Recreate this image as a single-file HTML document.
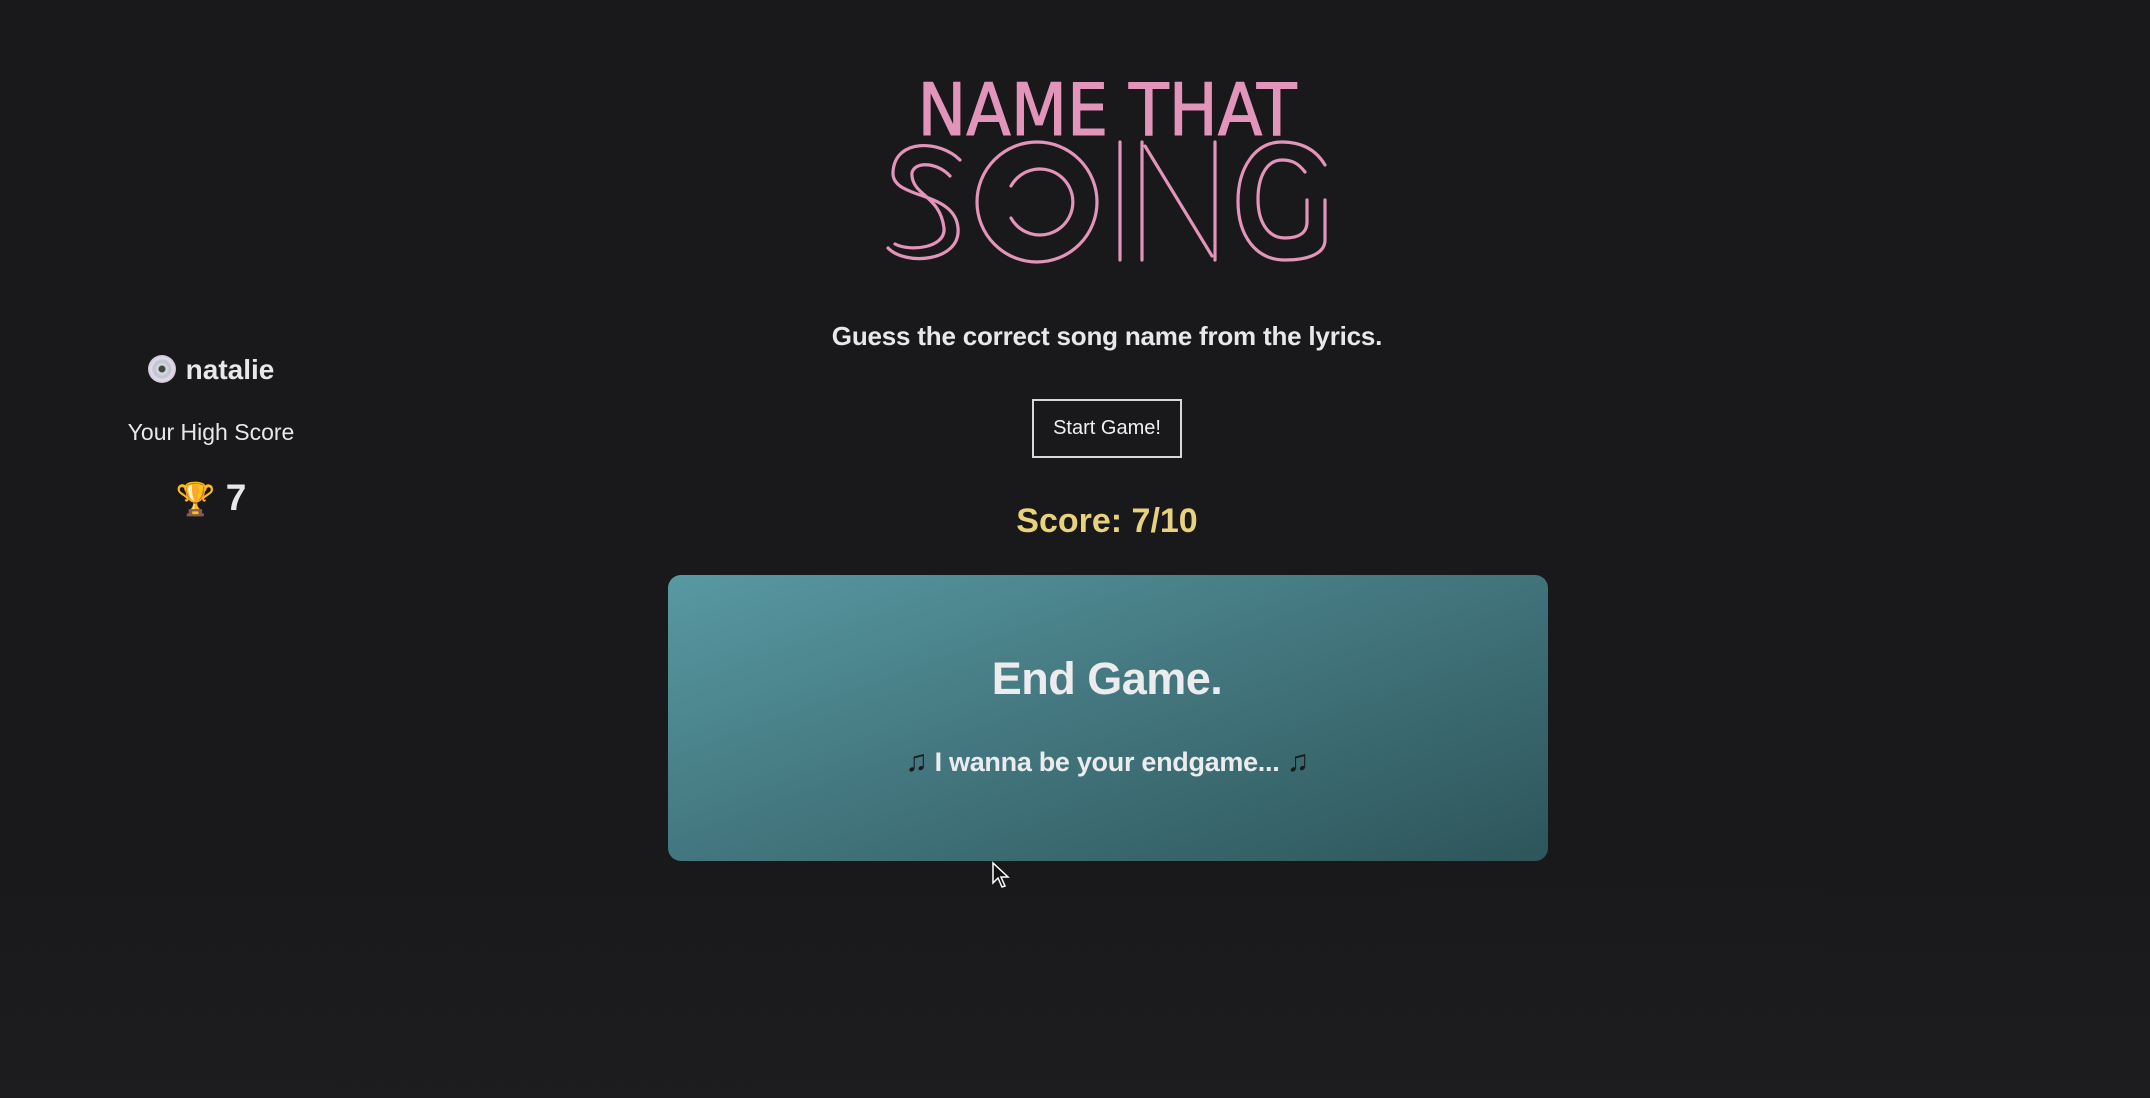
<!DOCTYPE html>
<html><head><meta charset="utf-8"><style>
html,body{margin:0;padding:0}
body{width:2150px;height:1098px;background:linear-gradient(#19191b 0%,#19191b 80%,#1d1d1f 100%);font-family:"Liberation Sans",sans-serif;color:#e8e8ea;position:relative;overflow:hidden}
.c{position:absolute;left:0;width:2214px;text-align:center;white-space:nowrap}
.l{position:absolute;left:0;width:422px;text-align:center;white-space:nowrap}
</style></head><body>
<svg style="position:absolute;left:0;top:0" width="2150" height="300">
<text x="1107" y="135" font-family="DejaVu Sans Condensed, Liberation Sans, sans-serif" font-size="72" fill="#e394ba" stroke="#e394ba" stroke-width="1" textLength="379" lengthAdjust="spacingAndGlyphs" text-anchor="middle">NAME THAT</text>
<g fill="none" stroke="#e394ba" stroke-width="3.2" stroke-linecap="round">
<path d="M960 160 C940 140 895 138 893 172 C891 200 955 190 958 228 C961 262 905 266 888 248"/>
<path d="M950 176 C935 160 910 162 912 176 C914 196 940 196 944 228 C946 248 910 252 895 244"/>
<circle cx="1037" cy="202" r="60"/>
<path d="M1011 186 A33 33 0 1 1 1011 218"/>
<line x1="1120" y1="142" x2="1120" y2="260"/>
<line x1="1142" y1="142" x2="1142" y2="260"/>
<line x1="1145" y1="146" x2="1212" y2="256"/>
<line x1="1215" y1="142" x2="1215" y2="260"/>
<path d="M1325 165 C1315 148 1300 142 1282 142 C1255 142 1238 168 1238 201 C1238 236 1256 260 1285 260 C1305 260 1325 255 1325 240 L1325 200"/>
<path d="M1305 172 C1298 163 1292 160 1282 160 C1266 160 1258 178 1258 199 C1258 222 1268 238 1285 238 C1300 238 1307 232 1307 222 L1307 200"/>
</g>
</svg>
<div class="c" style="top:321px;font-size:26px;font-weight:bold;letter-spacing:-0.2px">Guess the correct song name from the lyrics.</div>
<div style="position:absolute;left:1032px;top:399px;width:146px;height:55px;border:2px solid #d8d8d8;box-sizing:content-box;display:flex;align-items:center;justify-content:center;font-size:20px;color:#f0f0f0">Start Game!</div>
<div class="c" style="top:502px;font-size:34px;font-weight:bold;color:#e9d27c">Score: 7/10</div>
<div style="position:absolute;left:668px;top:575px;width:880px;height:286px;border-radius:13px;background:linear-gradient(160deg,#5899a2 0%,#447880 45%,#2d555a 100%)"></div>
<div class="c" style="top:653px;font-size:45px;font-weight:bold;color:#ececee;letter-spacing:-0.5px">End Game.</div>
<div class="c" style="top:745px;font-size:27px;font-weight:bold;color:#ececee;letter-spacing:-0.3px"><span style="color:#1a1a1a;font-size:30px">♫</span> I wanna be your endgame... <span style="color:#1a1a1a;font-size:30px">♫</span></div>
<div class="l" style="top:354px;font-size:28px;font-weight:bold"><span style="display:inline-block;width:28px;height:28px;border-radius:50%;background:radial-gradient(circle,#444 0 3px,#ddd 4px,#b9c4d0 8px,#e8d8f0 11px,#c8c8c8 14px);vertical-align:-4px;margin-right:10px"></span>natalie</div>
<div class="l" style="top:419px;font-size:23px">Your High Score</div>
<div class="l" style="top:477px;font-size:37px;font-weight:bold"><span style="color:#d99a2b;font-size:32px">🏆</span> 7</div>
<svg style="position:absolute;left:991px;top:861px" width="20" height="28"><path d="M2 2 L2 22 L7 17 L11 26 L14 25 L10 16 L17 16 Z" fill="#111" stroke="#fff" stroke-width="1.5"/></svg>
</body></html>
